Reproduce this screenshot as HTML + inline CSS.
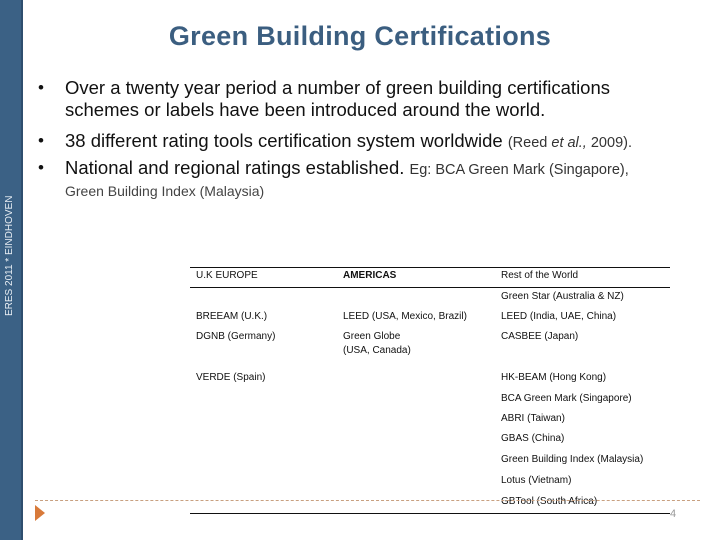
<!DOCTYPE html>
<html><head><style>
body{margin:0;width:720px;height:540px;background:#fff;position:relative;overflow:hidden;font-family:"Liberation Sans",sans-serif;}
.bar{position:absolute;left:0;top:0;width:21px;height:540px;background:#3b6185;border-right:2px solid #2e4e6e;}
.vt{position:absolute;left:-50px;top:250px;width:120px;text-align:center;transform:rotate(-90deg);color:#e8eef4;font-size:10px;line-height:12px;white-space:nowrap;}
h1{position:absolute;left:0;width:720px;top:21px;margin:0;text-align:center;font-size:27px;color:#3b5e80;font-weight:bold;letter-spacing:0.3px;}
.t{position:absolute;font-size:18.5px;color:#111;white-space:nowrap;line-height:20px;}
.b{position:absolute;left:38px;font-size:17px;}
.s{font-size:14.5px;color:#333;}
.g{position:absolute;left:65px;top:183px;font-size:14px;color:#444;}
.c{position:absolute;font-size:10px;color:#111;white-space:nowrap;line-height:12px;}
.hl{position:absolute;height:1px;background:#111;}
</style></head><body>
<div class="bar"></div><div class="vt">ERES 2011 * EINDHOVEN</div>
<h1>Green Building Certifications</h1>
<div class="t b" style="top:78px">•</div>
<div class="t" style="left:65px;top:78px">Over a twenty year period a number of green building certifications</div>
<div class="t" style="left:65px;top:100px">schemes or labels have been introduced around the world.</div>
<div class="t b" style="top:131px">•</div>
<div class="t" style="left:65px;top:131px">38 different rating tools certification system worldwide <span class="s">(Reed <i>et al.,</i> 2009).</span></div>
<div class="t b" style="top:158px">•</div>
<div class="t" style="left:65px;top:158px">National and regional ratings established. <span class="s">Eg: BCA Green Mark (Singapore),</span></div>
<div class="g">Green Building Index (Malaysia)</div>
<div class="hl" style="left:190px;top:267px;width:480px"></div>
<div class="hl" style="left:190px;top:287px;width:480px"></div>
<div class="c" style="left:196px;top:270px">U.K EUROPE</div>
<div class="c" style="left:343px;top:270px;font-weight:bold">AMERICAS</div>
<div class="c" style="left:501px;top:270px">Rest of the World</div>
<div class="c" style="left:501px;top:291px">Green Star (Australia &amp; NZ)</div>
<div class="c" style="left:196px;top:311px">BREEAM (U.K.)</div>
<div class="c" style="left:343px;top:311px">LEED (USA, Mexico, Brazil)</div>
<div class="c" style="left:501px;top:311px">LEED (India, UAE, China)</div>
<div class="c" style="left:196px;top:331px">DGNB (Germany)</div>
<div class="c" style="left:343px;top:331px">Green Globe<br><span style="line-height:15px">(USA, Canada)</span></div>
<div class="c" style="left:501px;top:331px">CASBEE (Japan)</div>
<div class="c" style="left:196px;top:372px">VERDE (Spain)</div>
<div class="c" style="left:501px;top:372px">HK-BEAM (Hong Kong)</div>
<div class="c" style="left:501px;top:393px">BCA Green Mark (Singapore)</div>
<div class="c" style="left:501px;top:413px">ABRI (Taiwan)</div>
<div class="c" style="left:501px;top:433px">GBAS (China)</div>
<div class="c" style="left:501px;top:454px">Green Building Index (Malaysia)</div>
<div class="c" style="left:501px;top:475px">Lotus (Vietnam)</div>
<div class="c" style="left:501px;top:496px">GBTool (South Africa)</div>
<div style="position:absolute;left:35px;top:500px;width:665px;border-top:1px dashed #c8a080"></div>
<div class="hl" style="left:190px;top:513px;width:480px"></div>
<div style="position:absolute;left:35px;top:505px;width:0;height:0;border-left:10px solid #d87a3a;border-top:8px solid transparent;border-bottom:8px solid transparent"></div>
<div class="c" style="left:670px;top:508px;color:#999;font-size:11px">4</div>
</body></html>
